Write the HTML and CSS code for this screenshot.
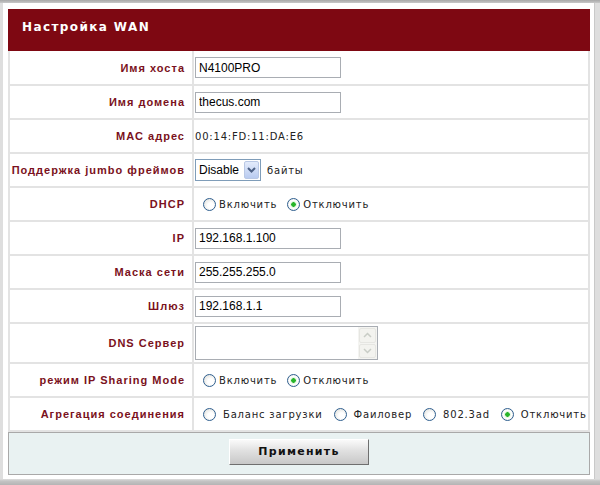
FILE: index.html
```html
<!DOCTYPE html>
<html lang="ru">
<head>
    <meta charset="UTF-8">
    <title>Настройка WAN</title>
    <link rel="stylesheet" href="styles.css">
</head>
<body>

    <div class="panel">
        <div class="title">Настройка WAN</div>

        <div class="form">
            <div class="label first">Имя хоста</div>
            <div class="value first"><input class="text" type="text" value="N4100PRO"></div>

            <div class="label">Имя домена</div>
            <div class="value"><input class="text" type="text" value="thecus.com"></div>

            <div class="label">MAC адрес</div>
            <div class="value">00:14:FD:11:DA:E6</div>

            <div class="label">Поддержка jumbo фреймов</div>
            <div class="value">
                <span class="select-wrap">
                    <select class="select">
                        <option>Disable</option>
                    </select>
                    <span class="select-arrow">
                        <svg width="9" height="6" viewBox="0 0 9 6"><path d="M1 1 L4.5 4.5 L8 1" fill="none" stroke="#4d6185" stroke-width="2"/></svg>
                    </span>
                </span>
                <span class="unit">байты</span>
            </div>

            <div class="label">DHCP</div>
            <div class="value">
                <label class="opt"><input type="radio" name="dhcp"> Включить</label>
                <label class="opt"><input type="radio" name="dhcp" checked> Отключить</label>
            </div>

            <div class="label">IP</div>
            <div class="value"><input class="text" type="text" value="192.168.1.100"></div>

            <div class="label">Маска сети</div>
            <div class="value"><input class="text" type="text" value="255.255.255.0"></div>

            <div class="label">Шлюз</div>
            <div class="value"><input class="text" type="text" value="192.168.1.1"></div>

            <div class="label tall">DNS Сервер</div>
            <div class="value tall">
                <div class="dns">
                    <textarea class="dns-text"></textarea>
                    <div class="dns-scroll">
                        <span class="scroll-btn">
                            <svg width="9" height="6" viewBox="0 0 9 6"><path d="M1 5 L4.5 1.5 L8 5" fill="none" stroke="#c9cdc6" stroke-width="1.5"/></svg>
                        </span>
                        <span class="scroll-btn">
                            <svg width="9" height="6" viewBox="0 0 9 6"><path d="M1 1 L4.5 4.5 L8 1" fill="none" stroke="#c9cdc6" stroke-width="1.5"/></svg>
                        </span>
                    </div>
                </div>
            </div>

            <div class="label">режим IP Sharing Mode</div>
            <div class="value">
                <label class="opt"><input type="radio" name="share"> Включить</label>
                <label class="opt"><input type="radio" name="share" checked> Отключить</label>
            </div>

            <div class="label">Агрегация соединения</div>
            <div class="value">
                <label class="opt wide"><input type="radio" name="bond"> Баланс загрузки</label>
                <label class="opt wide"><input type="radio" name="bond"> Фаиловер</label>
                <label class="opt wide"><input type="radio" name="bond"> 802.3ad</label>
                <label class="opt wide"><input type="radio" name="bond" checked> Отключить</label>
            </div>
        </div>

        <div class="footer">
            <button class="apply">Применить</button>
        </div>
    </div>

</body>
</html>
```

FILE: styles.css
```css
body {
    margin: 0;
    height: 485px;
    overflow: hidden;
    background: linear-gradient(#a8a8a8 0, #c8c8c8 3px, #dedede 3px, #dedede 479px, #c4c4c4 481px, #b4b4b4 100%);
    font-family: "DejaVu Sans", Verdana, sans-serif;
}

/* White sheet holding the whole form */
.panel {
    margin: 3px 0 0 3px;
    width: 592px;
    height: 476px;
    box-sizing: border-box;
    padding: 6px 4px 0 5px;
    background-color: #fff;
    border-right: 1px solid #c9c9c9;
}

.title {
    height: 42px;
    background-color: #7e0812;
    color: #fff;
    font-weight: bold;
    font-size: 12px;
    letter-spacing: 1.4px;
    line-height: 37px;
    padding-left: 14px;
}

/* Label / value grid */
.form {
    display: grid;
    grid-template-columns: 184px 1fr;
    border-left: 2px solid #e3e3e3;
    border-right: 2px solid #e3e3e3;
}

.label,
.value {
    height: 32px;
    border-bottom: 2px solid #e3e3e3;
    display: flex;
    align-items: center;
    white-space: nowrap;
}

.first {
    height: 33px;
}

.tall {
    height: 38px;
}

.label {
    justify-content: flex-end;
    padding-right: 7px;
    border-right: 2px solid #e3e3e3;
    color: #7a1120;
    font-family: "Liberation Sans", Arial, sans-serif;
    font-weight: bold;
    font-size: 11px;
    letter-spacing: 1px;
}

.value {
    padding-left: 1px;
    color: #222;
    font-size: 10px;
    letter-spacing: 0.8px;
}

.text {
    width: 146px;
    height: 21px;
    box-sizing: border-box;
    border: 1px solid #a9adb3;
    padding: 0 3px;
    font-family: "Liberation Sans", Arial, sans-serif;
    font-size: 12px;
    color: #000;
    letter-spacing: 0;
    margin: 0;
}

/* Dropdown */
.select-wrap {
    position: relative;
    display: inline-block;
    height: 22px;
}

.select {
    appearance: none;
    width: 66px;
    height: 22px;
    border: 1px solid #7f9db9;
    background-color: #fff;
    font-family: "Liberation Sans", Arial, sans-serif;
    font-size: 12px;
    letter-spacing: 0;
    padding: 0 0 0 3px;
    margin: 0;
    color: #000;
}

.select-arrow {
    position: absolute;
    top: 2px;
    right: 2px;
    width: 15px;
    height: 18px;
    box-sizing: border-box;
    border: 1px solid #b9c8e5;
    border-radius: 2px;
    background: linear-gradient(#e3ebfb, #b9cbf0);
    display: flex;
    align-items: center;
    justify-content: center;
}

.unit {
    margin-left: 6px;
}

/* Radio options */
.opt {
    display: inline-flex;
    align-items: center;
    margin-left: 8px;
}

.opt input {
    appearance: none;
    width: 13px;
    height: 13px;
    margin: 0 3px 0 0;
    border: 1px solid #2f5f8f;
    border-radius: 50%;
    background: radial-gradient(circle at 60% 60%, #fff 30%, #d8d8d2 100%);
}

.opt + .opt {
    margin-left: 10px;
}

.opt.wide input {
    margin-right: 7px;
}

.opt.wide + .opt.wide {
    margin-left: 11px;
}

.opt input:checked {
    background: radial-gradient(circle, #27b42a 0, #27b42a 2px, #d9f2d6 2.5px, #fff 4px, #dcdcd6 100%);
}

/* DNS box with a scroll column */
.dns {
    display: flex;
    width: 183px;
    height: 34px;
    box-sizing: border-box;
    border: 1px solid #a9adb3;
}

.dns-text {
    flex: 1;
    border: none;
    resize: none;
    margin: 0;
    padding: 0;
    outline: none;
}

.dns-scroll {
    width: 17px;
    display: flex;
    flex-direction: column;
    background-color: #f4f4f1;
    padding: 1px;
    gap: 1px;
}

.scroll-btn {
    flex: 1;
    border: 1px solid #e6e6e2;
    border-radius: 2px;
    background-color: #f3f3ef;
    display: flex;
    align-items: center;
    justify-content: center;
}

/* Bottom bar with the apply button */
.footer {
    height: 41px;
    background-color: #e9f2f2;
    border: 1px solid #a9a9a9;
    display: flex;
    justify-content: center;
    align-items: center;
}

.apply {
    width: 140px;
    height: 26px;
    margin-top: -4px;
    border: 1px solid;
    border-color: #fff #6f6f6f #6f6f6f #fff;
    background: linear-gradient(#fafafa, #e0e0e0 45%, #c8c8c8);
    font-family: "DejaVu Sans", Verdana, sans-serif;
    font-weight: bold;
    font-size: 11px;
    letter-spacing: 1.3px;
    color: #111;
}
```
